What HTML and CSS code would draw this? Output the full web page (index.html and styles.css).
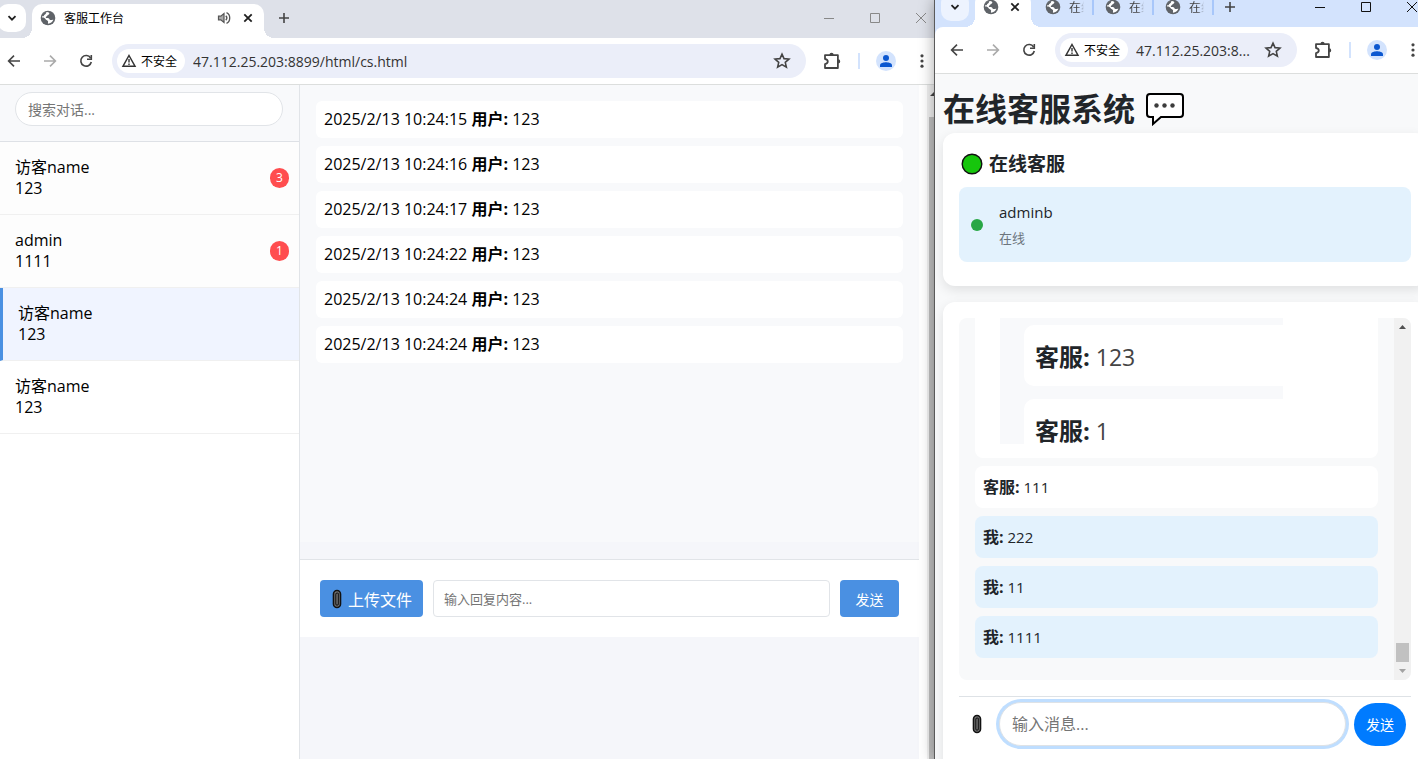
FILE: index.html
```html
<!DOCTYPE html>
<html lang="zh-CN">
<head>
  <meta charset="UTF-8">
  <meta name="viewport" content="width=device-width, initial-scale=1.0">
  <title>客服工作台</title>
  <link rel="stylesheet" href="styles.css">
</head>
<body>
  <!-- shared icons -->
  <svg class="sprite" width="0" height="0" aria-hidden="true">
    <symbol id="i-down" viewBox="0 0 16 16"><path d="M4.500 6.200L8 9.700l3.500-3.500" fill="none" stroke="#1f1f1f" stroke-width="1.800"/></symbol>
    <symbol id="i-globe" viewBox="0 0 16 16"><circle cx="8" cy="8" r="7.300" fill="#5f6368"/><path d="M6.800 1.900C9 2 9.700 2.900 9.200 4c-.5 1-1.700.8-2 1.700-.3.900-1.500.8-1.400 1.800.1.800 1.700.3 2.800.7 1.200.5.700 1.500 1.600 1.800.9.300 1.700-.4 3.200-.2-.9 2.300-2.900 3.900-5.400 3.900-.3-1 .5-1.700-.1-2.600-.7-.9-2-.8-2.400-2C5.100 8 3.600 7.300 2 7.500 2.200 4.500 4.300 2.200 6.800 1.900z" fill="#fff"/><path d="M3.700 6.200C4 4.500 5.200 4.800 5.900 3.500 6.300 2.700 6.100 2 6.800 1.500L3.500 3 1.700 6z" fill="#5f6368"/></symbol>
    <symbol id="i-x" viewBox="0 0 16 16"><path d="M4.300 4.300l7.400 7.400M11.700 4.300l-7.400 7.400" stroke="#1f1f1f" stroke-width="1.800"/></symbol>
    <symbol id="i-plus" viewBox="0 0 16 16"><path d="M8 3v10M3 8h10" stroke="#444" stroke-width="1.600"/></symbol>
    <symbol id="i-sound" viewBox="0 0 16 16"><path d="M2.500 6.200h2.300L8 3.500v9L4.800 9.800H2.500z" fill="#aaa" stroke="#555" stroke-width="1.200"/><path d="M9.800 5.800c1.200 1.200 1.200 3.200 0 4.400M10.500 2.700c4.300 1.800 4.300 8.800 0 10.600" fill="none" stroke="#555" stroke-width="1.300"/></symbol>
    <symbol id="i-back" viewBox="0 0 16 16"><path d="M14 8H3M8 2.600L2.600 8 8 13.400" fill="none" stroke="currentColor" stroke-width="1.600"/></symbol>
    <symbol id="i-next" viewBox="0 0 16 16"><path d="M2 8h11M8 2.600L13.400 8 8 13.400" fill="none" stroke="currentColor" stroke-width="1.600"/></symbol>
    <symbol id="i-reload" viewBox="0 0 16 16"><path d="M12.600 5A5.300 5.300 0 1 0 13.300 9" fill="none" stroke="#444" stroke-width="1.600"/><path d="M13.300 2v4.200H9" fill="none" stroke="#444" stroke-width="1.600"/></symbol>
    <symbol id="i-warn" viewBox="0 0 16 16"><path d="M8 2.500L14 13.200H2z" fill="none" stroke="#333" stroke-width="1.500"/><path d="M8 6v3.600M8 10.500V12" stroke="#333" stroke-width="1.400"/></symbol>
    <symbol id="i-star" viewBox="0 0 16 16"><path d="M8 1.900l1.800 4 4.400.4-3.300 2.900 1 4.300L8 11.200l-3.900 2.300 1-4.300L1.800 6.300l4.400-.4z" fill="none" stroke="#444" stroke-width="1.400"/></symbol>
    <symbol id="i-puzzle" viewBox="0 0 18 18"><path d="M2.700 3.700h11.600v11.600H2.700v-3.500c1.800-.3 2.500-1.200 2.500-2.300S4.500 7.500 2.700 7.200z" fill="none" stroke="#444" stroke-width="1.600" stroke-linejoin="round"/><path d="M6.700 3.500a1.900 1.900 0 0 1 3.800 0zM14.500 7.500a1.900 1.900 0 0 1 0 3.800z" fill="#444"/></symbol>
    <symbol id="i-user" viewBox="0 0 20 20"><circle cx="10" cy="10" r="10" fill="#d3e3fd"/><circle cx="10" cy="7" r="3" fill="#0b57d0"/><path d="M4 16v-1.800C4 12 8 11.200 10 11.200s6 .8 6 3V16z" fill="#0b57d0"/></symbol>
    <symbol id="i-dots" viewBox="0 0 16 16"><g fill="#444"><circle cx="8" cy="2.800" r="1.600"/><circle cx="8" cy="8" r="1.600"/><circle cx="8" cy="13.200" r="1.600"/></g></symbol>
    <symbol id="i-min" viewBox="0 0 12 12"><path d="M1 6.500h10" stroke="currentColor"/></symbol>
    <symbol id="i-max" viewBox="0 0 12 12"><path d="M1.500 1.500h9v9h-9z" fill="none" stroke="currentColor"/></symbol>
    <symbol id="i-close" viewBox="0 0 12 12"><path d="M1 1l10 10M11 1L1 11" stroke="currentColor"/></symbol>
    <symbol id="i-clip" viewBox="0 0 10 20"><rect x="1.500" y="1.500" width="7" height="17" rx="3.500" fill="#777" stroke="#111" stroke-width="1.600"/><path d="M3.800 5.500v9.500M6.300 5v10M3.800 15c0 1.500 2.500 1.500 2.500 0M3.800 5.500c0-2 2.500-2 2.500-.5" fill="none" stroke="#111" stroke-width="1.100"/></symbol>
  </svg>

  <div class="desktop">
    <!-- agent workbench -->
    <section class="window window-agent">
      <div class="tabstrip">
        <button class="tab-search" aria-label="搜索标签页"><svg width="16" height="16"><use href="#i-down"/></svg></button>
        <div class="tab active">
          <svg width="16" height="16"><use href="#i-globe"/></svg>
          <span class="tab-title">客服工作台</span>
          <svg width="16" height="16"><use href="#i-sound"/></svg>
          <button class="tab-close" aria-label="关闭"><svg width="16" height="16"><use href="#i-x"/></svg></button>
        </div>
        <button class="tab-new" aria-label="新标签页"><svg width="16" height="16"><use href="#i-plus"/></svg></button>
        <div class="controls">
          <button aria-label="最小化"><svg width="12" height="12"><use href="#i-min"/></svg></button>
          <button aria-label="最大化"><svg width="12" height="12"><use href="#i-max"/></svg></button>
          <button aria-label="关闭窗口"><svg width="12" height="12"><use href="#i-close"/></svg></button>
        </div>
      </div>
      <div class="toolbar">
        <button class="tool" aria-label="后退"><svg width="16" height="16"><use href="#i-back"/></svg></button>
        <button class="tool muted" aria-label="前进"><svg width="16" height="16"><use href="#i-next"/></svg></button>
        <button class="tool" aria-label="刷新"><svg width="16" height="16"><use href="#i-reload"/></svg></button>
        <div class="omnibox">
          <span class="chip"><svg width="16" height="16"><use href="#i-warn"/></svg>不安全</span>
          <input class="url" type="text" aria-label="地址" value="47.112.25.203:8899/html/cs.html">
          <svg width="18" height="18"><use href="#i-star"/></svg>
        </div>
        <button class="tool" aria-label="扩展程序"><svg width="20" height="20"><use href="#i-puzzle"/></svg></button>
        <span class="divider"></span>
        <button class="tool" aria-label="用户"><svg width="20" height="20"><use href="#i-user"/></svg></button>
        <button class="tool" aria-label="菜单"><svg width="16" height="16"><use href="#i-dots"/></svg></button>
      </div>

      <div class="workbench">
        <aside class="sidebar">
          <div class="search">
            <input type="text" aria-label="搜索对话" placeholder="搜索对话...">
          </div>
          <ul class="users">
            <li class="user unread"><div><div>访客name</div><div>123</div></div><span class="badge">3</span></li>
            <li class="user unread"><div><div>admin</div><div>1111</div></div><span class="badge">1</span></li>
            <li class="user selected"><div><div>访客name</div><div>123</div></div></li>
            <li class="user"><div><div>访客name</div><div>123</div></div></li>
          </ul>
        </aside>
        <main class="conversation">
          <div class="history">
            <div class="message">2025/2/13 10:24:15 <strong>用户:</strong> 123</div>
            <div class="message">2025/2/13 10:24:16 <strong>用户:</strong> 123</div>
            <div class="message">2025/2/13 10:24:17 <strong>用户:</strong> 123</div>
            <div class="message">2025/2/13 10:24:22 <strong>用户:</strong> 123</div>
            <div class="message">2025/2/13 10:24:24 <strong>用户:</strong> 123</div>
            <div class="message">2025/2/13 10:24:24 <strong>用户:</strong> 123</div>
          </div>
          <form class="reply">
            <button class="upload" type="button"><svg width="10" height="20"><use href="#i-clip"/></svg>上传文件</button>
            <input type="text" aria-label="回复内容" placeholder="输入回复内容...">
            <button class="reply-send" type="button">发送</button>
          </form>
        </main>
        <div class="page-scroll">
          <svg width="8" height="32"><path d="M3 11l5-5v5z" fill="#444"/></svg>
          <div class="page-thumb"></div>
        </div>
      </div>
    </section>

    <!-- visitor page -->
    <section class="window window-visitor">
      <div class="tabstrip">
        <button class="tab-search" aria-label="搜索标签页"><svg width="16" height="16"><use href="#i-down"/></svg></button>
        <div class="tab active small">
          <svg width="16" height="16"><use href="#i-globe"/></svg>
          <button class="tab-close" aria-label="关闭"><svg width="16" height="16"><use href="#i-x"/></svg></button>
        </div>
        <div class="tab idle"><svg width="16" height="16"><use href="#i-globe"/></svg><span>在线</span></div>
        <div class="tab idle"><svg width="16" height="16"><use href="#i-globe"/></svg><span>在线</span></div>
        <div class="tab idle"><svg width="16" height="16"><use href="#i-globe"/></svg><span>在线</span></div>
        <button class="tab-new" aria-label="新标签页"><svg width="16" height="16"><use href="#i-plus"/></svg></button>
        <div class="controls">
          <button aria-label="最小化"><svg width="12" height="12"><use href="#i-min"/></svg></button>
          <button aria-label="最大化"><svg width="12" height="12"><use href="#i-max"/></svg></button>
          <button aria-label="关闭窗口"><svg width="12" height="12"><use href="#i-close"/></svg></button>
        </div>
      </div>
      <div class="toolbar">
        <button class="tool" aria-label="后退"><svg width="16" height="16"><use href="#i-back"/></svg></button>
        <button class="tool muted" aria-label="前进"><svg width="16" height="16"><use href="#i-next"/></svg></button>
        <button class="tool" aria-label="刷新"><svg width="16" height="16"><use href="#i-reload"/></svg></button>
        <div class="omnibox">
          <span class="chip"><svg width="16" height="16"><use href="#i-warn"/></svg>不安全</span>
          <input class="url" type="text" aria-label="地址" value="47.112.25.203:8...">
          <svg width="18" height="18"><use href="#i-star"/></svg>
        </div>
        <button class="tool" aria-label="扩展程序"><svg width="20" height="20"><use href="#i-puzzle"/></svg></button>
        <span class="divider"></span>
        <button class="tool" aria-label="用户"><svg width="20" height="20"><use href="#i-user"/></svg></button>
        <button class="tool" aria-label="菜单"><svg width="16" height="16"><use href="#i-dots"/></svg></button>
      </div>

      <main class="visitor">
        <h1>在线客服系统
          <svg width="38" height="34" viewBox="0 0 38 34"><path d="M4 2h30q3 0 3 3v17q0 3-3 3H15l-8 7v-7H4q-3 0-3-3V5q0-3 3-3z" fill="#fff" stroke="#000" stroke-width="2"/><g fill="#3c3c3c"><circle cx="10.500" cy="13.500" r="2.200"/><circle cx="18.500" cy="13.500" r="2.200"/><circle cx="26.500" cy="13.500" r="2.200"/></g></svg>
        </h1>
        <div class="card">
          <h3><svg width="22" height="22" viewBox="0 0 22 22"><circle cx="11" cy="11" r="9.800" fill="#16c60c" stroke="#111" stroke-width="1.400"/></svg>在线客服</h3>
          <div class="agent">
            <span class="status"></span>
            <div>
              <div class="agent-name">adminb</div>
              <div class="agent-state">在线</div>
            </div>
          </div>
        </div>
        <div class="card">
          <div class="chat">
            <div class="chat-list">
              <div class="bubble bubble-image">
                <div class="shot">
                  <div class="shot-row"><strong>客服:</strong> 123</div>
                  <div class="shot-row"><strong>客服:</strong> 1</div>
                </div>
              </div>
              <div class="bubble"><strong>客服:</strong> 111</div>
              <div class="bubble mine"><strong>我:</strong> 222</div>
              <div class="bubble mine"><strong>我:</strong> 11</div>
              <div class="bubble mine"><strong>我:</strong> 1111</div>
            </div>
            <div class="chat-scroll">
              <svg width="17" height="17"><path d="M5 11h7L8.500 7z" fill="#505050"/></svg>
              <div class="chat-thumb"></div>
              <svg width="17" height="17"><path d="M5 6h7l-3.500 4z" fill="#a3a3a3"/></svg>
            </div>
          </div>
          <form class="composer">
            <button class="attach" type="button" aria-label="上传文件"><svg width="10" height="20"><use href="#i-clip"/></svg></button>
            <input type="text" aria-label="消息" placeholder="输入消息...">
            <button class="send" type="button">发送</button>
          </form>
        </div>
      </main>
    </section>
  </div>
</body>
</html>
```

FILE: styles.css
```css
* {
  box-sizing: border-box;
}

body {
  margin: 0;
  font-family: "Open Sans", "Noto Sans CJK SC", sans-serif;
  font-size: 16px;
  color: #000;
  overflow: hidden;
}

button,
input {
  font-family: inherit;
  margin: 0;
}

button {
  border: none;
  background: none;
  padding: 0;
  cursor: pointer;
}

svg {
  flex: none;
  display: block;
}

.sprite {
  position: absolute;
}

.desktop {
  display: grid;
  grid-template-columns: 934fr 484fr;
  height: 100vh;
}

.window {
  display: flex;
  flex-direction: column;
  min-width: 0;
  min-height: 0;
  overflow: hidden;
}

.window-visitor {
  position: relative;
  border-left: 1px solid #5a5a5a;
  box-shadow: 0 0 14px rgba(0, 0, 0, 0.35);
  background: #d3e3fd;
}

/* browser frame */
.tabstrip {
  display: flex;
  flex: none;
  height: 38px;
  padding-top: 4px;
  background: #dee1e9;
}

.window-visitor .tabstrip {
  margin-top: -11px;
  padding-left: 6px;
  background: #d3e3fd;
}

.tab-search {
  display: flex;
  align-items: center;
  justify-content: center;
  width: 28px;
  height: 28px;
  border-radius: 10px;
  background: #fff;
}

.window-agent .tab-search {
  margin-left: -2px;
}

.window-visitor .tab-search {
  background: #edf3fe;
}

.tab {
  display: flex;
  align-items: center;
  height: 34px;
  padding-bottom: 6px;
  font-size: 12px;
}

.tab.active {
  position: relative;
  flex: 0 1 232px;
  margin-left: 6px;
  padding-left: 8px;
  padding-right: 8px;
  gap: 8px;
  background: #fff;
  border-radius: 10px 10px 0 0;
}

.tab.active::before,
.tab.active::after {
  content: "";
  position: absolute;
  bottom: 0;
  width: 10px;
  height: 10px;
}

.tab.active::before {
  right: 100%;
  background: radial-gradient(circle at 0 0, transparent 10px, #fff 10px);
}

.tab.active::after {
  left: 100%;
  background: radial-gradient(circle at 100% 0, transparent 10px, #fff 10px);
}

.tab.small {
  flex: 0 0 55px;
}

.tab-title {
  flex: 1;
}

.tab.idle {
  position: relative;
  width: 60px;
  padding-left: 11px;
  gap: 8px;
  color: #444;
}

.tab.small + .idle {
  margin-left: 3px;
}

.tab.idle span {
  width: 15px;
  overflow: hidden;
  white-space: nowrap;
  -webkit-mask-image: linear-gradient(90deg, #000 60%, transparent);
  mask-image: linear-gradient(90deg, #000 60%, transparent);
}

.tab.idle::after {
  content: "";
  position: absolute;
  right: 0;
  top: 6px;
  width: 2px;
  height: 16px;
  background: #a8c7fa;
}

.tab-new {
  width: 28px;
  height: 28px;
  padding: 6px;
}

.window-agent .tab-new {
  margin-left: 6px;
}

.window-visitor .tab-new {
  margin-left: 2px;
}

.controls {
  display: flex;
  margin-left: auto;
  margin-right: -10px;
  color: #888;
}

.window-visitor .controls {
  margin-right: -17px;
  color: #111;
}

.controls button {
  display: flex;
  align-items: center;
  justify-content: center;
  width: 46px;
  height: 28px;
  color: inherit;
}

.toolbar {
  display: flex;
  flex: none;
  align-items: center;
  height: 47px;
  background: #fff;
  border-bottom: 1px solid #dcdedd;
}

.window-agent .toolbar {
  margin: 0 -6px 0 -4px;
}

.window-visitor .toolbar {
  margin-right: -13px;
  padding-left: 4px;
  border-radius: 8px 0 0 0;
}

.tool {
  display: flex;
  flex: none;
  align-items: center;
  justify-content: center;
  width: 36px;
  height: 34px;
  color: #444;
}

.tool.muted {
  color: #aaa;
}

.divider {
  width: 2px;
  height: 16px;
  margin: 0 8px;
  background: #d3e3fd;
}

.omnibox {
  display: flex;
  flex: 1;
  align-items: center;
  min-width: 0;
  height: 34px;
  margin: 0 8px;
  padding: 0 15px 0 5px;
  border-radius: 17px;
  background: #ebeef9;
}

.chip {
  display: flex;
  flex: none;
  align-items: center;
  gap: 4px;
  height: 24px;
  padding: 0 8px 0 4px;
  border-radius: 12px;
  background: #fff;
  font-size: 12px;
}

.url {
  flex: 1;
  min-width: 0;
  padding: 0 0 0 8px;
  border: none;
  outline: none;
  background: none;
  color: #333;
  font-size: 14px;
}

/* agent workbench */
.workbench {
  display: flex;
  flex: 1;
  min-height: 0;
}

.sidebar {
  flex: none;
  width: 300px;
  background: #fff;
  border-right: 1px solid #e1e4e8;
}

.search {
  padding: 7px 16px 15px 15px;
  background: #f8f9fb;
  border-bottom: 1px solid #dee1e6;
}

.search input {
  width: 100%;
  height: 34px;
  padding: 0 12px;
  border: 1px solid #e1e4e8;
  border-radius: 17px;
  background: #fff;
  font-size: 14px;
}

input::placeholder {
  color: #757575;
}

.users {
  margin: 0;
  padding: 0;
  list-style: none;
}

.user {
  display: flex;
  align-items: center;
  justify-content: space-between;
  padding: 15px 10px 15px 15px;
  border-bottom: 1px solid #f0f0f0;
  line-height: 21px;
}

.user.unread {
  background: #fdfdfd;
}

.user.selected {
  background: #f0f4ff;
  border-left: 3px solid #4a90e2;
}

.badge {
  min-width: 19px;
  border-radius: 10px;
  background: #ff4d4f;
  color: #fff;
  font-size: 12px;
  line-height: 20px;
  text-align: center;
}

.conversation {
  flex: 1;
  min-width: 0;
  background: #f5f6fa;
}

.history {
  height: 457px;
  padding: 16px;
  background: #f8f9fb;
}

.message {
  margin-bottom: 8px;
  padding: 8px;
  border-radius: 6px;
  background: #fff;
  line-height: 21px;
}

.reply {
  display: flex;
  gap: 10px;
  margin-top: 17px;
  padding: 20px;
  border-top: 1px solid #e1e4e8;
  background: #fff;
}

.reply input {
  flex: 1;
  min-width: 0;
  height: 37px;
  padding: 0 10px;
  border: 1px solid #e1e4e8;
  border-radius: 4px;
  font-size: 13px;
}

.upload,
.reply-send {
  display: flex;
  align-items: center;
  justify-content: center;
  height: 37px;
  border-radius: 4px;
  background: #4a90e2;
  color: #fff;
}

.upload {
  gap: 6px;
  padding: 0 11px 0 12px;
  font-size: 16px;
}

.reply-send {
  min-width: 59px;
  font-size: 14px;
}

.page-scroll {
  flex: none;
  width: 15px;
  padding-left: 8px;
  background: linear-gradient(90deg, #fff 8px, #f1f1f1 8px);
}

.page-thumb {
  height: 100%;
  margin-left: 2px;
  background: #c1c1c1;
}

/* visitor page */
.visitor {
  flex: 1;
  min-height: 0;
  padding-left: 8px;
  overflow: hidden;
  background: #f8f9fa;
  color: #212529;
}

.visitor h1 {
  display: flex;
  align-items: center;
  gap: 11px;
  height: 59px;
  margin: 0;
  padding-top: 10px;
  font-size: 32px;
  line-height: 44px;
}

.card {
  margin: 0 -9px 16px 0;
  padding: 16px;
  border-radius: 12px;
  background: #fff;
  box-shadow: 0 4px 12px rgba(0, 0, 0, 0.1);
}

.card h3 {
  display: flex;
  align-items: center;
  gap: 6px;
  margin: 0 0 8px;
  padding-left: 2px;
  font-size: 19px;
  line-height: 30px;
}

.agent {
  display: flex;
  align-items: center;
  gap: 16px;
  margin-bottom: 8px;
  padding: 12px;
  border-radius: 8px;
  background: #e3f2fd;
}

.status {
  width: 12px;
  height: 12px;
  border-radius: 50%;
  background: #28a745;
}

.agent-name {
  font-size: 15px;
  line-height: 27px;
}

.agent-state {
  color: #6c757d;
  font-size: 13px;
  line-height: 24px;
}

.chat {
  display: flex;
  height: 362px;
  border-radius: 8px;
  background: #f8f9fa;
  overflow: hidden;
}

.chat-list {
  display: flex;
  flex: 1;
  flex-direction: column;
  min-width: 0;
  padding: 0 16px 14px;
}

.bubble {
  margin-bottom: 8px;
  padding: 8px;
  border-radius: 8px;
  background: #fff;
  font-size: 15px;
  line-height: 26px;
}

.bubble strong {
  font-size: 16px;
  line-height: 20px;
}

.bubble.mine {
  background: #e3f2fd;
}

.bubble-image {
  flex: 1;
  min-height: 0;
  padding: 0 95px 14px 25px;
  border-radius: 0 0 8px 8px;
}

.shot {
  height: 100%;
  padding: 7px 0 0 24px;
  overflow: hidden;
  background: #f8f9fb;
}

.shot-row {
  height: 61px;
  margin-bottom: 13px;
  padding: 0 11px;
  border-radius: 10px 0 0 10px;
  background: #fff;
  color: #444;
  font-size: 23px;
  line-height: 64px;
}

.shot-row strong {
  color: #212529;
  font-size: 24px;
}

.chat-scroll {
  display: flex;
  flex-direction: column;
  width: 17px;
  background: #f1f1f1;
}

.chat-thumb {
  height: 19px;
  margin: auto 2px 1px;
  background: #c1c1c1;
}

.composer {
  display: flex;
  align-items: center;
  margin-top: 16px;
  padding: 5px 5px 16px 0;
  border-top: 1px solid #dee2e6;
}

.attach {
  padding: 8px 17px 8px 13px;
}

.composer input {
  flex: 1;
  min-width: 0;
  height: 44px;
  padding: 0 12px;
  border: 1px solid #dee2e6;
  border-radius: 22px;
  outline: none;
  box-shadow: 0 0 0 3px #bfdeff;
  font-size: 16px;
}

.send {
  width: 52px;
  height: 43px;
  margin-left: 8px;
  border-radius: 22px;
  background: #007bff;
  color: #fff;
  font-size: 14px;
}
```
